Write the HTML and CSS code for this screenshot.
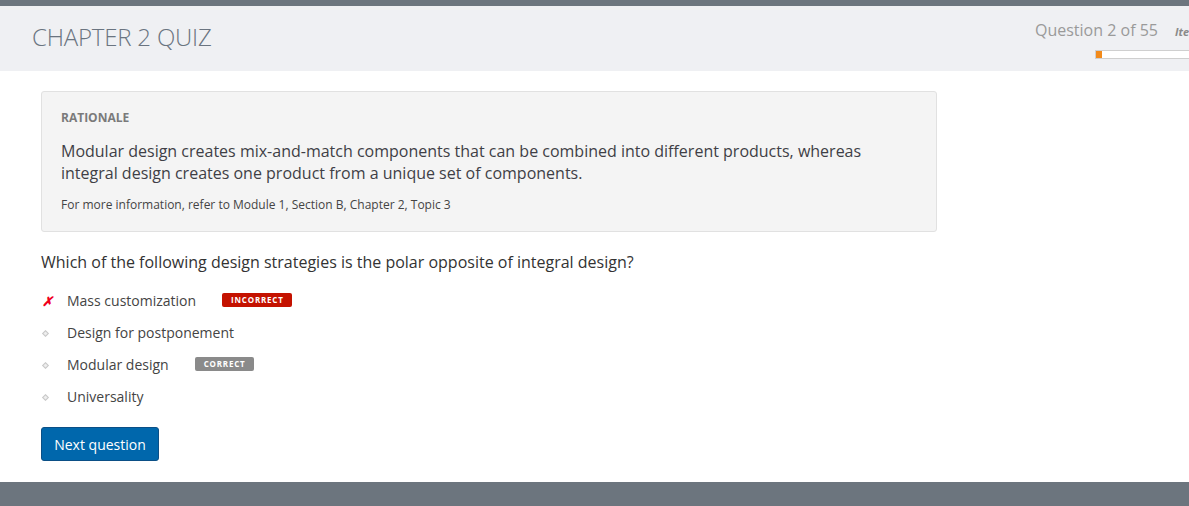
FILE: index.html
```html
<!DOCTYPE html>
<html>
<head>
<meta charset="utf-8">
<link rel="stylesheet" href="styles.css">
</head>
<body>
<div class="topbar"></div>
<header class="header">
  <h1 class="title">CHAPTER 2 QUIZ</h1>
  <div class="progress-area">
    <div class="progress-text"><span class="qcount">Question 2 of 55</span><span class="items">Items</span></div>
    <div class="progress-bar"><div class="progress-fill"></div></div>
  </div>
</header>
<main class="main">
  <section class="rationale">
    <div class="rationale-label">RATIONALE</div>
    <p class="rationale-text">Modular design creates mix-and-match components that can be combined into different products, whereas integral design creates one product from a unique set of components.</p>
    <p class="rationale-ref">For more information, refer to Module 1, Section B, Chapter 2, Topic 3</p>
  </section>
  <p class="question">Which of the following design strategies is the polar opposite of integral design?</p>
  <ul class="options">
    <li class="option"><span class="mark mark-x">✗</span><span class="opt-text">Mass customization</span><span class="badge badge-incorrect">INCORRECT</span></li>
    <li class="option"><span class="mark"><span class="dot"></span></span><span class="opt-text">Design for postponement</span></li>
    <li class="option"><span class="mark"><span class="dot"></span></span><span class="opt-text">Modular design</span><span class="badge badge-correct">CORRECT</span></li>
    <li class="option"><span class="mark"><span class="dot"></span></span><span class="opt-text">Universality</span></li>
  </ul>
  <button class="next-btn">Next question</button>
</main>
<footer class="footer"></footer>
</body>
</html>
```
FILE: styles.css
```css
* { box-sizing: border-box; }
html, body { margin: 0; padding: 0; }
body {
  font-family: "Open Sans", "Liberation Sans", sans-serif;
  color: #333;
  background: #fff;
  width: 1189px;
  height: 506px;
  overflow: hidden;
  display: flex;
  flex-direction: column;
}
.topbar { height: 6px; background: #6c757e; flex: none; }
.header {
  height: 65px;
  background: #eff0f3;
  display: flex;
  align-items: flex-start;
  flex: none;
  overflow: hidden;
}
.title {
  margin: 16px 0 0 32px;
  font-weight: 300;
  font-size: 24px;
  line-height: 30px;
  color: #6a7480;
  letter-spacing: -0.2px;
}
.progress-area {
  margin-top: 13px;
  margin-left: auto;
  margin-right: -60px;
  width: 214px;
  flex: none;
  display: flex;
  flex-direction: column;
  align-items: flex-start;
}
.progress-text {
  display: flex;
  align-items: baseline;
  white-space: nowrap;
  font-size: 16px;
  color: #9a9a9a;
  line-height: 22px;
}
.items {
  font-style: italic;
  font-weight: 700;
  font-size: 11px;
  color: #8a8a8a;
  margin-left: 17px;
}
.progress-bar {
  margin-top: 7px;
  margin-left: 60px;
  width: 154px;
  height: 9px;
  background: #fff;
  border: 1px solid #cfcfcf;
}
.progress-fill { width: 6px; height: 100%; background: #f28a1a; }
.main {
  flex: 1;
  padding: 20px 0 0 41px;
}
.rationale {
  width: 896px;
  background: #f4f4f4;
  border: 1px solid #e1e1e1;
  border-radius: 3px;
  padding: 18px 20px 18px 19px;
}
.rationale-label {
  font-size: 12px;
  font-weight: 700;
  color: #7a7a7a;
  line-height: 16px;
}
.rationale-text {
  margin: 14px 0 0;
  font-size: 16px;
  line-height: 22px;
  color: #3f3f46;
}
.rationale-ref {
  margin: 13px 0 0;
  font-size: 12px;
  line-height: 16px;
  color: #444;
}
.question {
  margin: 18px 0 0;
  font-size: 16px;
  line-height: 24px;
  color: #333;
}
.options { list-style: none; margin: 11px 0 0; padding: 0; }
.option {
  display: flex;
  align-items: center;
  height: 32px;
  font-size: 14px;
  color: #444;
}
.mark {
  width: 26px;
  flex: none;
  display: flex;
  align-items: center;
  padding-left: 1px;
}
.mark-x {
  color: #f0001c;
  font-size: 13px;
  font-weight: 700;
  font-style: italic;
  padding-left: 1px;
}
.dot {
  width: 5px;
  height: 5px;
  margin-left: 1px;
  border: 1px solid #c8c8c8;
  transform: rotate(45deg);
  background: #eee;
}
.opt-text { line-height: 20px; }
.badge {
  display: inline-block;
  color: #fff;
  font-size: 8px;
  font-weight: 700;
  letter-spacing: 0.8px;
  line-height: 14px;
  height: 14px;
  border-radius: 2px;
  margin-top: -2px;
}
.badge-incorrect { background: #c41200; padding: 0 8px 0 9px; margin-left: 26px; }
.badge-correct { background: #8a8a8a; padding: 0 8px 0 9px; margin-left: 26px; }
.next-btn {
  margin-top: 14px;
  width: 118px;
  height: 34px;
  background: #0067ac;
  border: 1px solid #0b4f86;
  border-radius: 3px;
  color: #fff;
  font-family: "Open Sans", "Liberation Sans", sans-serif;
  font-size: 14px;
  padding: 0;
}
.footer { height: 24px; background: #6c757e; flex: none; }
```
